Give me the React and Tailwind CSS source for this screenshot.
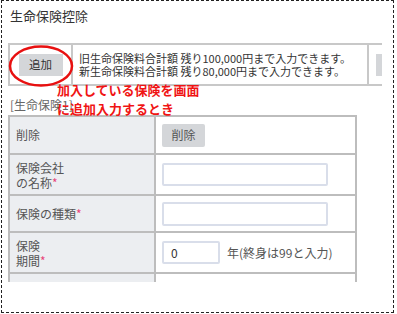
import React from "react";

const F = { fontFamily: '"Noto Sans CJK JP", "Noto Sans", sans-serif' };

function Req() {
  return <span className="text-[#e8457a]">*</span>;
}

export default function App() {
  return (
    <div className="w-[397px] h-[314px] bg-white" style={F}>
      <div className="ml-px w-[393px] h-[313px] border border-dashed border-[#222]">
        <div className="relative w-[380px] h-[281px] overflow-hidden">
          <div className="pl-[8px] pt-[6px] text-[13px] leading-[18px] text-[#333]">生命保険控除</div>

          <div className="ml-[6px] mt-[18px] w-[420px] h-[43px] flex border-y-2 border-l-2 border-[#c8c8c8]">
            <div className="w-[63px] shrink-0 flex items-center justify-center border-r-2 border-[#c8c8c8]">
              <div className="w-[44px] h-[22px] bg-[#d4d6d9] flex items-center justify-center text-[11.5px] text-[#333]">追加</div>
            </div>
            <div className="w-[296px] shrink-0 flex flex-col justify-center pl-[6px] text-[11px] leading-[13px] text-[#333] whitespace-nowrap border-r-2 border-[#c8c8c8]">
              <div>旧生命保険料合計額 残り100,000円まで入力できます。</div>
              <div>新生命保険料合計額 残り80,000円まで入力できます。</div>
            </div>
            <div className="flex items-center pl-[7px]">
              <div className="w-[40px] h-[22px] bg-[#d4d6d9]" />
            </div>
          </div>

          <div className="pl-[8px] mt-[10px] text-[12px] leading-[18px] text-[#666]">[生命保険1]</div>

          <div className="ml-[6px] mt-[1px] w-[349px] border-t-2 border-x-2 border-[#bdbdbd]">
            <div className="flex h-[38px] border-b-2 border-[#bdbdbd]">
              <div className="w-[146px] shrink-0 bg-[#eceef1] border-r-2 border-[#bdbdbd] flex items-center pl-[6px] text-[12px] text-[#555]">削除</div>
              <div className="flex items-center pl-[6px]">
                <div className="w-[43px] h-[23px] bg-[#d4d6d9] rounded-[2px] flex items-center justify-center text-[12px] text-[#555]">削除</div>
              </div>
            </div>
            <div className="flex h-[41px] border-b-2 border-[#bdbdbd]">
              <div className="w-[146px] shrink-0 bg-[#eceef1] border-r-2 border-[#bdbdbd] flex flex-col justify-center pl-[6px] text-[12px] leading-[15px] text-[#555]">
                <div>保険会社</div>
                <div>の名称<Req /></div>
              </div>
              <div className="flex items-center pl-[6px]">
                <div className="w-[166px] h-[23px] border-2 border-[#d9deea] rounded-[2px] bg-white" />
              </div>
            </div>
            <div className="flex h-[37px] border-b-2 border-[#bdbdbd]">
              <div className="w-[146px] shrink-0 bg-[#eceef1] border-r-2 border-[#bdbdbd] flex items-center pl-[6px] text-[12px] text-[#555]">
                <div>保険の種類<Req /></div>
              </div>
              <div className="flex items-center pl-[6px]">
                <div className="w-[166px] h-[24px] border-2 border-[#d9deea] rounded-[2px] bg-white" />
              </div>
            </div>
            <div className="flex h-[41px] border-b-2 border-[#bdbdbd]">
              <div className="w-[146px] shrink-0 bg-[#eceef1] border-r-2 border-[#bdbdbd] flex flex-col justify-center pl-[6px] text-[12px] leading-[15px] text-[#555]">
                <div>保険</div>
                <div>期間<Req /></div>
              </div>
              <div className="flex items-center pl-[6px]">
                <div className="w-[58px] h-[23px] border-2 border-[#d9deea] rounded-[2px] bg-white flex items-center pl-[7px] text-[12px] text-[#333]">0</div>
                <div className="ml-[7px] text-[12px] text-[#555]">年(終身は99と入力)</div>
              </div>
            </div>
            <div className="flex h-[40px]">
              <div className="w-[146px] shrink-0 bg-[#eceef1] border-r-2 border-[#bdbdbd]" />
              <div />
            </div>
          </div>

          <div className="absolute left-[55px] top-[79px] text-[13px] leading-[19px] font-bold text-[#f01414] whitespace-nowrap">
            <div>加入している保険を画面</div>
            <div>に追加入力するとき</div>
          </div>

          <svg className="absolute left-[4px] top-[42px]" width="70" height="46" viewBox="0 0 70 46">
            <ellipse cx="35" cy="23" rx="31" ry="19.5" fill="none" stroke="#e81010" strokeWidth="2.5" />
          </svg>
        </div>
      </div>
    </div>
  );
}
